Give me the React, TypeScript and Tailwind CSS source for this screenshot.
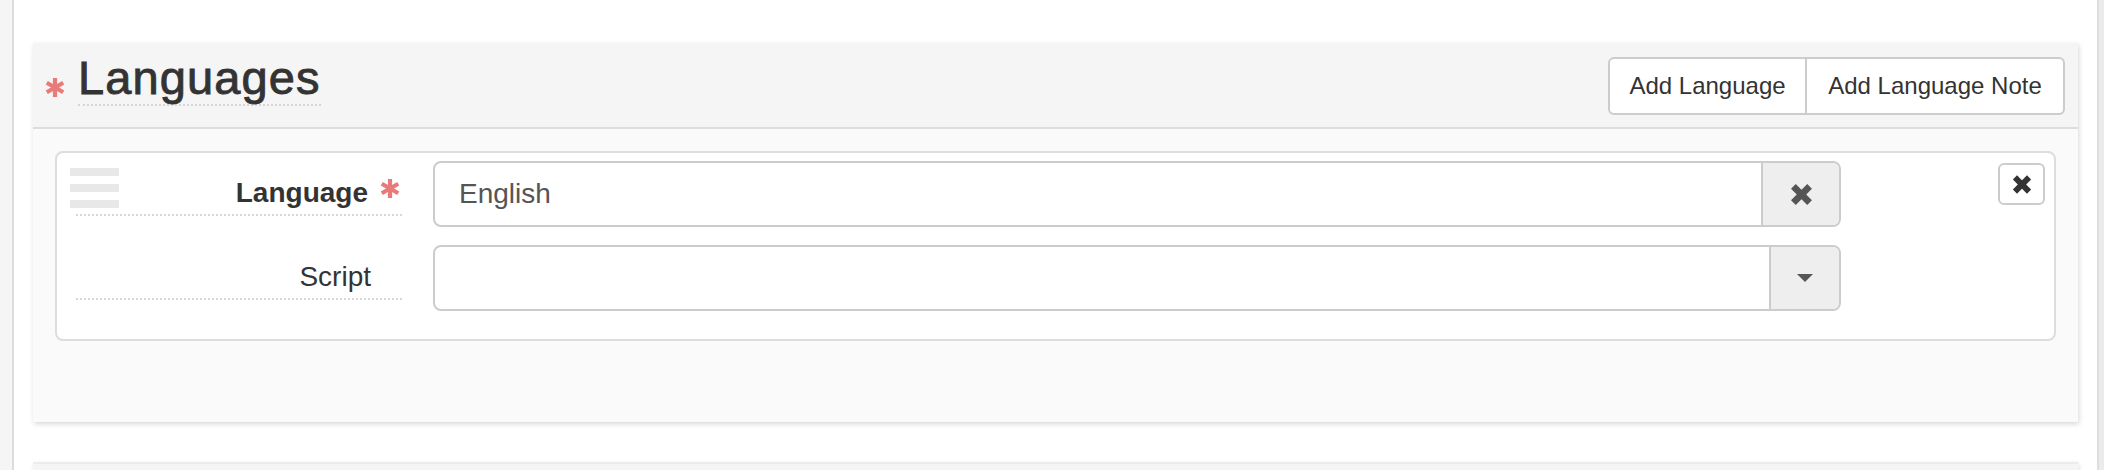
import React from "react";

const FONT = { fontFamily: '"Liberation Sans", Arial, Helvetica, sans-serif' };

function Asterisk({ className }: { className?: string }) {
  return (
    <svg viewBox="0 0 20 20" className={className} fill="#e97a7a">
      <rect x="7.8" y="0" width="4.4" height="20" />
      <rect x="7.8" y="0" width="4.4" height="20" transform="rotate(60 10 10)" />
      <rect x="7.8" y="0" width="4.4" height="20" transform="rotate(-60 10 10)" />
    </svg>
  );
}

function Times({ className }: { className?: string }) {
  return (
    <svg viewBox="0 0 24 22" className={className} fill="currentColor">
      <rect x="8.5" y="-1" width="7" height="24" transform="rotate(45 12 11)" />
      <rect x="8.5" y="-1" width="7" height="24" transform="rotate(-45 12 11)" />
    </svg>
  );
}

function Caret() {
  return (
    <svg viewBox="0 0 16 8" className="w-[16px] h-[8px]" fill="#555555">
      <path d="M0 0H16L8 8Z" />
    </svg>
  );
}

function FieldLabel({ text, required }: { text: string; required?: boolean }) {
  return (
    <div className="w-[326px] mr-[31px] shrink-0">
      <div className="relative pt-[12px] pb-[1px] pr-[31px] text-right border-b-2 border-dotted border-[#d8d8d8]">
        <span
          className={
            required
              ? "text-[28px] leading-[40px] font-bold text-[#333333] mr-[3px]"
              : "text-[28px] leading-[40px] text-[#333333]"
          }
        >
          {text}
        </span>
        {required && (
          <Asterisk className="absolute right-[2px] top-[18px] w-[20px] h-[19px] blur-[0.4px]" />
        )}
      </div>
    </div>
  );
}

export default function App() {
  return (
    <div className="flex w-[2104px] h-[470px] overflow-hidden bg-white" style={FONT}>
      <div className="w-[14px] shrink-0 bg-[#f5f5f5] border-r-2 border-[#dcdcdc]" />

      <div className="flex-1 pt-[43px] px-[19px]">
        <section className="bg-[#fafafa] shadow-[1px_2px_5px_rgba(0,0,0,0.16)]">
          <header className="h-[86px] flex items-start bg-[#f5f5f5] border-b-2 border-[#dddddd] pl-[12px]">
            <Asterisk className="mt-[35px] w-[20px] h-[19px] blur-[0.5px]" />
            <h2 className="ml-[13px] mt-[11px] text-[47px] leading-[48px] tracking-[1.1px] pb-[2px] text-[#333333] [-webkit-text-stroke:0.9px_#333333] border-b-2 border-dotted border-[#d4d4d4]">
              Languages
            </h2>
            <div className="ml-auto mr-[13px] mt-[14px] flex h-[58px] text-[24px] text-[#333333]">
              <button className="w-[199px] h-[58px] bg-white border-2 border-[#cccccc] rounded-l-[6px]">
                Add Language
              </button>
              <button className="w-[258px] h-[58px] bg-white border-y-2 border-r-2 border-[#cccccc] rounded-r-[6px]">
                Add Language Note
              </button>
            </div>
          </header>

          <div className="pt-[22px] px-[22px] pb-[81px]">
            <div className="relative flex bg-white border-2 border-[#dddddd] rounded-[8px] pt-[8px] pb-[28px] pl-[19px]">
              <div className="absolute left-[13px] top-[15px] flex flex-col gap-[8px] blur-[0.4px]">
                <span className="block w-[49px] h-[8px] bg-[#e8e8e8]" />
                <span className="block w-[49px] h-[8px] bg-[#e8e8e8]" />
                <span className="block w-[49px] h-[8px] bg-[#e8e8e8]" />
              </div>

              <div className="flex flex-col gap-[18px]">
                <div className="flex h-[66px]">
                  <FieldLabel text="Language" required />
                  <div className="flex w-[1408px] h-[66px] border-2 border-[#cccccc] rounded-[8px] overflow-hidden">
                    <div className="flex-1 flex items-center pl-[24px] text-[28px] text-[#555555]">English</div>
                    <div className="w-[78px] flex items-center justify-center bg-[#eeeeee] border-l-2 border-[#cccccc] text-[#555555]">
                      <Times className="w-[23px] h-[21px]" />
                    </div>
                  </div>
                </div>
                <div className="flex h-[66px]">
                  <FieldLabel text="Script" />
                  <div className="flex w-[1408px] h-[66px] border-2 border-[#cccccc] rounded-[8px] overflow-hidden">
                    <div className="flex-1" />
                    <div className="w-[70px] flex items-center justify-center bg-[#eeeeee] border-l-2 border-[#cccccc]">
                      <Caret />
                    </div>
                  </div>
                </div>
              </div>

              <button className="ml-auto mr-[9px] mt-[2px] self-start w-[47px] h-[42px] flex items-center justify-center bg-white border-2 border-[#cccccc] rounded-[6px] text-[#333333]">
                <Times className="w-[20px] h-[19px]" />
              </button>
            </div>
          </div>
        </section>

        <div className="mt-[40px] h-[60px] bg-[#f5f5f5] border-t-2 border-[#ececec] shadow-[1px_2px_5px_rgba(0,0,0,0.12)]" />
      </div>

      <div className="w-[7px] shrink-0 bg-[#ebebeb] border-l-2 border-[#dedede]" />
    </div>
  );
}
